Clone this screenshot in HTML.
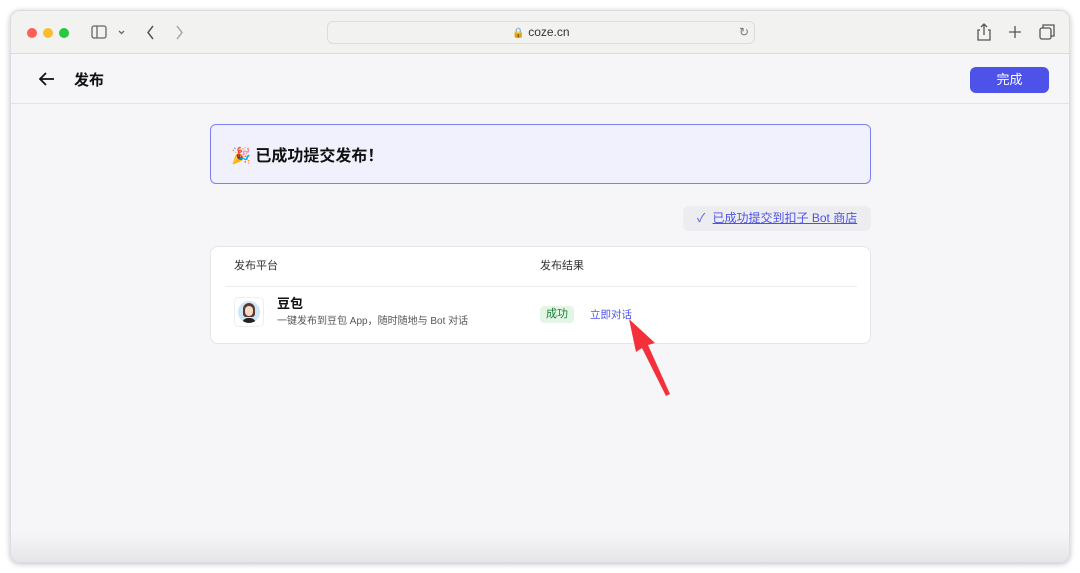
<!DOCTYPE html>
<html><head><meta charset="utf-8"><style>
*{margin:0;padding:0;box-sizing:border-box}
body{width:1080px;height:573px;background:#fff;font-family:"Liberation Sans","Noto Sans CJK SC",sans-serif;position:relative;overflow:hidden}
.win{position:absolute;left:10px;top:10px;width:1060px;height:553px;border-radius:10px;background:#f6f6f8;box-shadow:0 1px 6px rgba(0,0,0,.25);overflow:hidden;border:1px solid #d8dde6}
.tb{position:absolute;left:0;top:0;width:100%;height:43px;background:#f2f2f1;border-bottom:1px solid #dcdcdc}
.dot{position:absolute;top:17px;width:10px;height:10px;border-radius:50%}
.url{position:absolute;left:316px;top:10px;width:428px;height:23px;border:1px solid #dcdcdc;border-radius:6px;background:#f2f2f1;font-size:12px;color:#333;text-align:center;line-height:21px}
.hd{position:absolute;left:0;top:43px;width:100%;height:50px;border-bottom:1px solid #e2e3e6}
.btn{position:absolute;right:20px;top:13px;width:79px;height:26px;background:#4d53e8;border-radius:6px;color:#fff;font-size:13px;text-align:center;line-height:26px}
.banner{position:absolute;left:199px;top:113px;width:661px;height:60px;border:1px solid #7c80f0;border-radius:6px;background:#f1f1fe;font-size:16px;font-weight:bold;color:#111;padding:17px 0 0 20px}
.store{position:absolute;left:672px;top:195px;width:188px;height:25px;background:#ececf1;border-radius:6px;font-size:12px;color:#4d53e8;line-height:25px;padding-left:14px}
.card{position:absolute;left:199px;top:235px;width:661px;height:98px;background:#fff;border:1px solid #e4e5e8;border-radius:8px}
.small{font-size:11px;color:#333;position:absolute;line-height:14px}
</style></head><body>
<div class="win">
 <div class="tb">
  <div class="dot" style="left:16px;background:#fe5f57"></div>
  <div class="dot" style="left:32px;background:#febc2e"></div>
  <div class="dot" style="left:48px;background:#28c840"></div>
  <svg style="position:absolute;left:80px;top:14px" width="60" height="16" fill="none" stroke="#666" stroke-width="1.3"><rect x="1" y="1" width="14" height="12" rx="2"/><line x1="6" y1="1" x2="6" y2="13"/><path d="M28 6l2.5 2.5L33 6"/></svg>
  <svg style="position:absolute;left:134px;top:13px" width="50" height="18" fill="none" stroke="#555" stroke-width="1.5"><path d="M8 2L3 8.5 8 15"/><path d="M32 2l5 6.5-5 6.5" stroke="#aaa"/></svg>
  <div class="url"><span style="color:#888;font-size:10px">🔒</span> coze.cn<span style="position:absolute;right:5px;color:#777">↻</span></div>
  <svg style="position:absolute;left:964px;top:11px" width="80" height="20" fill="none" stroke="#555" stroke-width="1.3"><path d="M5 8H3v10h12V8h-2M9 13V2M6 5l3-3 3 3"/><path d="M40 4v12M34 10h12"/><rect x="65" y="6" width="11" height="11" rx="2"/><path d="M68 6V3h11v11h-3"/></svg>
 </div>
 <div class="hd">
  <svg style="position:absolute;left:28px;top:18px" width="16" height="14" fill="none" stroke="#111" stroke-width="1.8"><path d="M15 7H2M7 1L1 7l6 6"/></svg>
  <div style="position:absolute;left:63px;top:15px;font-size:15px;font-weight:bold;color:#111">发布</div>
  <div class="btn">完成</div>
 </div>
 <div class="banner">🎉 已成功提交发布！</div>
 <div class="store">✓ <u style="margin-left:4px">已成功提交到扣子 Bot 商店</u></div>
 <div class="card">
  <div class="small" style="left:23px;top:12px">发布平台</div>
  <div class="small" style="left:329px;top:12px">发布结果</div>
  <div style="position:absolute;left:14px;top:39px;width:632px;border-top:1px solid #ebecef"></div>
  <div style="position:absolute;left:23px;top:50px;width:30px;height:30px;border:1px solid #eee;border-radius:5px">
   <div style="position:absolute;left:3px;top:3px;width:22px;height:22px;border-radius:50%;background:#cfe5f8;overflow:hidden"><div style="position:absolute;left:5px;top:2px;width:12px;height:14px;border-radius:6px 6px 3px 3px;background:#5a3a2e"></div><div style="position:absolute;left:7px;top:5px;width:8px;height:10px;border-radius:4px;background:#f7d9c8"></div><div style="position:absolute;left:4px;top:17px;width:14px;height:8px;border-radius:6px 6px 0 0;background:#222"></div></div>
  </div>
  <div style="position:absolute;left:66px;top:49px;font-size:13px;font-weight:bold;color:#111;line-height:16px">豆包</div>
  <div class="small" style="left:66px;top:68px;color:#555;font-size:10px">一键发布到豆包 App，随时随地与 Bot 对话</div>
  <div style="position:absolute;left:329px;top:59px;width:34px;height:17px;background:#e3f6e6;color:#1a7a35;font-size:11px;border-radius:4px;text-align:center;line-height:17px">成功</div>
  <div class="small" style="left:379px;top:61px;color:#4d53e8;font-size:10.5px">立即对话</div>
 </div>
 <div style="position:absolute;left:0;bottom:0;width:100%;height:30px;background:linear-gradient(#f6f6f8,#e6e6ea)"></div>
</div>
<svg style="position:absolute;left:620px;top:316px" width="60" height="84"><path d="M9 3L35 27 28 29 50 78 46 80 22 32 16 36Z" fill="#f4313a"/></svg>
</body></html>
